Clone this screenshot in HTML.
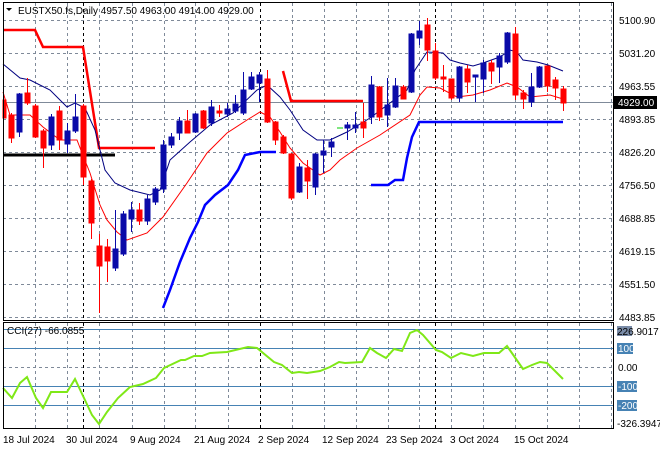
<!DOCTYPE html>
<html><head><meta charset="utf-8"><style>
html,body{margin:0;padding:0;background:#fff;width:660px;height:450px;overflow:hidden}
svg{display:block}
text{font-family:"Liberation Sans",sans-serif;font-size:10px;fill:#000}
</style></head><body>
<svg width="660" height="450" viewBox="0 0 660 450" xmlns="http://www.w3.org/2000/svg">
<rect width="660" height="450" fill="#fff"/>
<g stroke="#7f8a99" stroke-width="1" stroke-dasharray="3,3" fill="none">
<path d="M3 20.5H613M3 53.5H613M3 86.5H613M3 119.5H613M3 152.5H613M3 185.5H613M3 218.5H613M3 251.5H613M3 284.5H613M3 317.5H613"/>
<path d="M35.5 3V320M67.5 3V320M99.5 3V320M132.5 3V320M164.5 3V320M195.5 3V320M228.5 3V320M292.5 3V320M324.5 3V320M356.5 3V320M388.5 3V320M419.5 3V320M451.5 3V320M483.5 3V320M515.5 3V320M547.5 3V320M579.5 3V320M611.5 3V320"/>
<path d="M35.5 323V428M67.5 323V428M99.5 323V428M132.5 323V428M164.5 323V428M195.5 323V428M228.5 323V428M292.5 323V428M324.5 323V428M356.5 323V428M388.5 323V428M419.5 323V428M451.5 323V428M483.5 323V428M515.5 323V428M547.5 323V428M579.5 323V428M611.5 323V428"/>
<path d="M3 367.5H613"/>
</g>
<g stroke="#000" stroke-width="1" stroke-dasharray="3,3">
<path d="M83.5 3V320M260.5 3V320M435.5 3V320M83.5 323V428M260.5 323V428M435.5 323V428"/>
</g>
<path d="M3 102.5H613" stroke="#7f8a99"/>
<g stroke="#4682b4" stroke-width="1"><path d="M3 329.5H613M3 348.5H613M3 386.5H613M3 405.5H613"/></g>

<!-- indicator lines -->
<path d="M3 155H115" stroke="#000" stroke-width="3"/>
<path d="M3 30H35L43 47H83L99 148H155" stroke="#f00" stroke-width="2.5" fill="none"/>
<path d="M283 71L291 101H363" stroke="#f00" stroke-width="2.5" fill="none"/>
<path d="M163 308L170 290L180 262L190 238L198 222L205 205L215 195L228 185L238 170L245 155L260 152H276" stroke="#00f" stroke-width="2.5" fill="none"/>
<path d="M371 185H388L395 180H403L407 158L412 137L419 122H563" stroke="#00f" stroke-width="2.5" fill="none"/>
<path d="M3 64L20 78L30 80L50 90L67 107L75 103L85 108L95 130L105 170L115 183L130 190L150 195L160 190L170 160L190 142L210 125L233 113L257 90L267 85L280 97L290 110L303 130L317 140L330 140L347 132L370 118L390 103L407 90L415 70L427 52L443 53L450 60L460 63L473 66L483 63L497 58L503 55L510 50L517 52L523 60L537 62L548 65L563 71" stroke="#000080" stroke-width="1" fill="none"/>
<path d="M3 92L10 115L30 115L43 127L60 140L77 140L82 153L90 173L100 205L107 220L117 232L127 240L147 233L163 217L187 183L207 153L227 133L247 120L260 112L270 117L280 132L290 148L303 163L320 175L330 170L340 160L357 148L380 135L410 115L420 95L427 87L440 88L457 97L473 95L490 90L507 83L517 87L530 97L550 95L563 99" stroke="#f00" stroke-width="1" fill="none"/>

<!-- candles -->
<g id="c">
<g stroke="#f00" fill="#f00">
<path d="M3.5 90V120M11.5 113V143M27.5 78V105M35.5 104V138M43.5 129V168M59.5 106V150M83.5 104V185M91.5 179V239M99.5 234V313M107.5 239V282M139.5 203V225M187.5 110V133M203.5 110V129M219.5 105V117M267.5 70V123M275.5 121V145M283.5 135V154M291.5 153V200M307.5 160V199M363.5 103V138M379.5 86V121M403.5 85V99M427.5 18V61M435.5 43V80M443.5 65V92M451.5 79V100M467.5 65V93M491.5 60V84M515.5 27V100M523.5 90V109M547.5 66V92M555.5 77V100M563.5 86V111"/>
<rect x="3" y="100" width="3" height="18"/><rect x="9" y="115" width="5" height="23"/><rect x="25" y="93" width="5" height="10"/><rect x="33" y="106" width="5" height="31"/><rect x="41" y="131" width="5" height="17"/><rect x="57" y="111" width="5" height="29"/><rect x="81" y="106" width="5" height="71"/><rect x="89" y="181" width="5" height="42"/><rect x="97" y="246" width="5" height="20"/><rect x="105" y="247" width="5" height="14"/><rect x="137" y="210" width="5" height="11"/><rect x="185" y="121" width="5" height="12"/><rect x="201" y="111" width="5" height="17"/><rect x="217" y="111" width="5" height="2"/><rect x="265" y="79" width="5" height="43"/><rect x="273" y="122" width="5" height="18"/><rect x="281" y="137" width="5" height="16"/><rect x="289" y="154" width="5" height="44"/><rect x="305" y="168" width="5" height="13"/><rect x="361" y="122" width="5" height="6"/><rect x="377" y="87" width="5" height="30"/><rect x="401" y="87" width="5" height="12"/><rect x="425" y="25" width="5" height="25"/><rect x="433" y="51" width="5" height="27"/><rect x="441" y="77" width="5" height="2"/><rect x="449" y="79" width="5" height="19"/><rect x="465" y="69" width="5" height="13"/><rect x="489" y="63" width="5" height="8"/><rect x="513" y="34" width="5" height="61"/><rect x="521" y="93" width="5" height="6"/><rect x="545" y="66" width="5" height="20"/><rect x="553" y="80" width="5" height="8"/><rect x="561" y="89" width="5" height="14"/>
</g>
<g stroke="#0a0aa8" fill="#0a0aa8">
<path d="M19.5 93V137M51.5 114V150M67.5 123V153M75.5 94V133M115.5 210V271M123.5 211V256M131.5 202V232M147.5 195V225M155.5 187V205M163.5 140V193M171.5 133V148M179.5 117V140M195.5 113V133M211.5 100V126M227.5 103V117M235.5 95V113M243.5 72V115M251.5 72V90M259.5 72V102M299.5 163V193M315.5 153V195M323.5 140V173M331.5 138V157M347.5 122V140M355.5 112V133M371.5 76V124M387.5 78V127M395.5 78V108M411.5 33V93M419.5 21V45M459.5 66V102M475.5 76V102M483.5 60V93M499.5 53V83M507.5 32V64M531.5 73V107M539.5 66V88"/>
<rect x="17" y="94" width="5" height="38"/><rect x="49" y="117" width="5" height="28"/><rect x="65" y="131" width="5" height="13"/><rect x="73" y="117" width="5" height="14"/><rect x="113" y="249" width="5" height="19"/><rect x="121" y="214" width="5" height="40"/><rect x="129" y="210" width="5" height="9"/><rect x="145" y="199" width="5" height="22"/><rect x="153" y="189" width="5" height="13"/><rect x="161" y="145" width="5" height="44"/><rect x="169" y="137" width="5" height="8"/><rect x="177" y="121" width="5" height="12"/><rect x="193" y="114" width="5" height="18"/><rect x="209" y="107" width="5" height="16"/><rect x="225" y="109" width="5" height="5"/><rect x="233" y="104" width="5" height="7"/><rect x="241" y="90" width="5" height="23"/><rect x="249" y="77" width="5" height="12"/><rect x="257" y="75" width="5" height="8"/><rect x="297" y="167" width="5" height="25"/><rect x="313" y="154" width="5" height="33"/><rect x="321" y="151" width="5" height="4"/><rect x="329" y="142" width="5" height="5"/><rect x="345" y="125" width="5" height="3"/><rect x="353" y="125" width="5" height="3"/><rect x="369" y="85" width="5" height="32"/><rect x="385" y="105" width="5" height="10"/><rect x="393" y="86" width="5" height="21"/><rect x="409" y="34" width="5" height="58"/><rect x="417" y="31" width="5" height="7"/><rect x="457" y="67" width="5" height="31"/><rect x="473" y="75" width="5" height="2"/><rect x="481" y="63" width="5" height="16"/><rect x="497" y="56" width="5" height="11"/><rect x="505" y="33" width="5" height="29"/><rect x="529" y="87" width="5" height="15"/><rect x="537" y="67" width="5" height="20"/>
</g>
<path d="M337 128H343" stroke="#00cc00" stroke-width="1"/>
</g>

<!-- CCI -->
<path d="M3 388L12 398L20 383L27 377L36 398L43 408L51 392L67 392L75 379L84 398L92 415L99 424L107 412L118 398L130 387L143 384L156 378L164 368L181 360L185 360L194 356L202 356L210 353L227 352L248 347L257 348L274 362L282 365L292 373L299 372L307 373L320 371L330 367L339 362L345 363L362 362L370 348L377 353L386 358L394 349L402 351L410 333L417 330L423 335L436 350L442 352L451 358L461 353L473 356L484 353L499 353L507 346L523 369L532 365L540 362L547 363L563 379" stroke="#7fe817" stroke-width="2" fill="none"/>

<!-- frames -->
<rect x="3.5" y="2.5" width="610" height="318" fill="none" stroke="#000"/>
<rect x="3.5" y="322.5" width="610" height="106" fill="none" stroke="#000"/>

<!-- title -->
<path d="M6 8H12L9 11Z" fill="#000"/>
<text x="18" y="14">EUSTX50.fs,Daily  4957.50 4963.00 4914.00 4929.00</text>
<text x="7" y="334">CCI(27) -66.0855</text>

<!-- price axis -->
<g>
<text x="619" y="24">5100.90</text>
<text x="619" y="57">5031.20</text>
<text x="619" y="90">4963.55</text>
<text x="619" y="123">4893.85</text>
<text x="619" y="156">4826.20</text>
<text x="619" y="189">4756.50</text>
<text x="619" y="222">4688.85</text>
<text x="619" y="255">4619.15</text>
<text x="619" y="288">4551.50</text>
<text x="619" y="321">4483.85</text>
</g>
<rect x="614" y="96" width="43" height="13" fill="#000"/>
<text x="618" y="106" style="fill:#fff">4929.00</text>
<rect x="617" y="326" width="15" height="10" fill="#7a8ca8"/>
<text x="617" y="335">226.9017</text>
<rect x="617" y="343" width="16" height="11" fill="#4682b4"/>
<text x="618" y="352" style="fill:#fff">100</text>
<text x="618" y="371">0.00</text>
<rect x="617" y="381" width="20" height="11" fill="#4682b4"/>
<text x="618" y="390" style="fill:#fff">-100</text>
<rect x="617" y="400" width="20" height="11" fill="#4682b4"/>
<text x="618" y="409" style="fill:#fff">-200</text>
<text x="617" y="427">-326.3947</text>

<!-- dates -->
<g>
<text x="3" y="443">18 Jul 2024</text>
<text x="66" y="443">30 Jul 2024</text>
<text x="130" y="443">9 Aug 2024</text>
<text x="194" y="443">21 Aug 2024</text>
<text x="258" y="443">2 Sep 2024</text>
<text x="322" y="443">12 Sep 2024</text>
<text x="386" y="443">23 Sep 2024</text>
<text x="450" y="443">3 Oct 2024</text>
<text x="514" y="443">15 Oct 2024</text>
</g>
</svg>
</body></html>
